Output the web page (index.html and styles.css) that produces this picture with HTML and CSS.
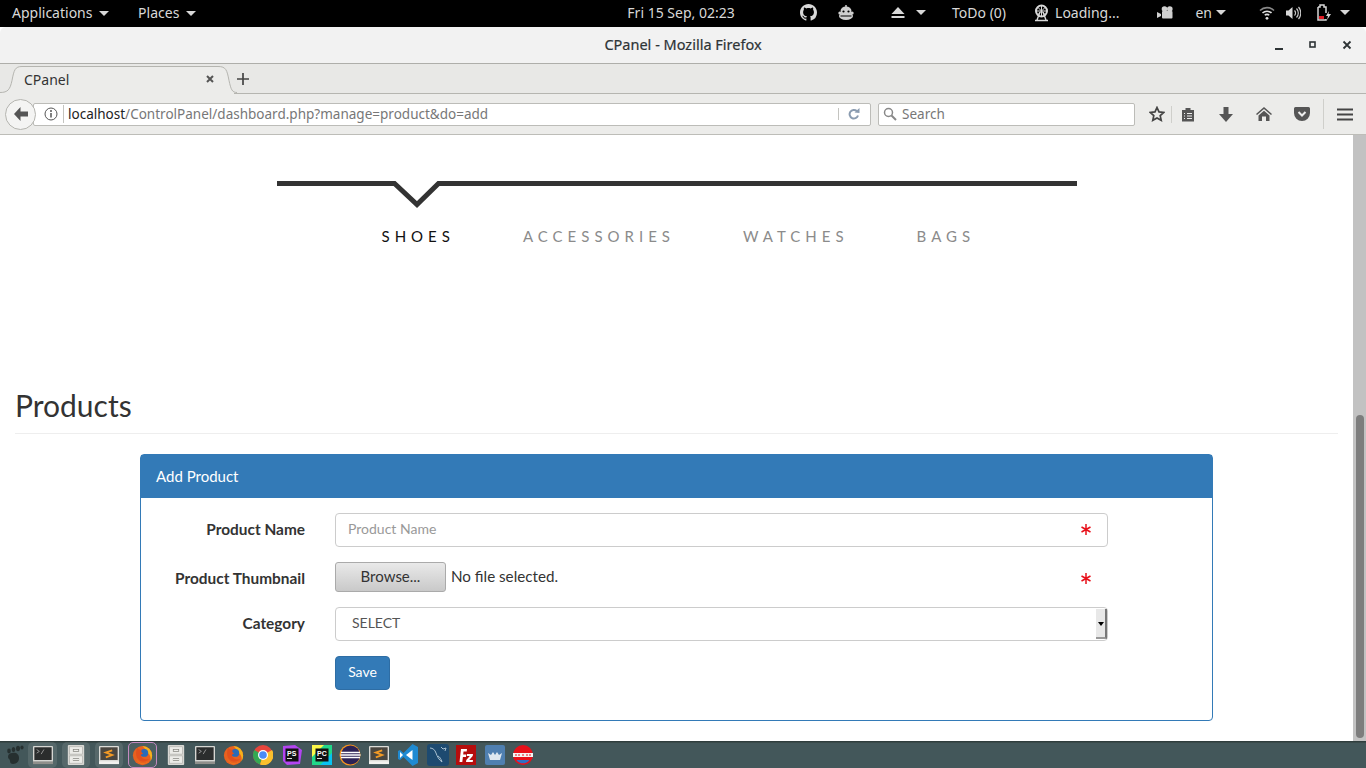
FILE: index.html
```html
<!DOCTYPE html>
<html lang="en">
<head>
    <meta charset="UTF-8">
    <title>CPanel - Mozilla Firefox</title>
    <link rel="stylesheet" href="styles.css">
</head>
<body>

    <!-- Shared taskbar icons -->
    <svg class="defs" width="0" height="0">
        <symbol id="i-terminal" viewBox="0 0 24 22">
            <rect x="1" y="1" width="22" height="20" rx="1" fill="#d6d6d2"/>
            <rect x="2.500" y="2.500" width="19" height="14" fill="#2b2d2d"/>
            <path d="M5 5l3 2-3 2M10 10l3-5" stroke="#9a9a9a" fill="none"/>
            <rect x="1" y="18" width="22" height="3" fill="#8f8f8b"/>
        </symbol>
        <symbol id="i-files" viewBox="0 0 22 24">
            <rect x="2" y="1" width="18" height="22" rx="1" fill="#d8d8d4"/>
            <rect x="4" y="3" width="14" height="8" fill="#ecece8" stroke="#a5a5a0" stroke-width=".6"/>
            <rect x="4" y="13" width="14" height="8" fill="#ecece8" stroke="#a5a5a0" stroke-width=".6"/>
            <rect x="8" y="6" width="6" height="2" fill="none" stroke="#85857f" stroke-width=".8"/>
            <rect x="8" y="16" width="6" height="2" fill="none" stroke="#85857f" stroke-width=".8"/>
        </symbol>
        <symbol id="i-sublime" viewBox="0 0 24 22">
            <rect x="1" y="1" width="22" height="20" rx="1" fill="#dcdcd8"/>
            <rect x="2.500" y="2.500" width="19" height="14" fill="#4a4640"/>
            <path d="M15.500 6l-7 2.400 7 2.600-7 2.600" stroke="#f49a25" stroke-width="2" fill="none"/>
            <rect x="1" y="18" width="22" height="3" fill="#f2f2ef"/>
        </symbol>
        <symbol id="i-firefox" viewBox="0 0 24 24">
            <circle cx="12" cy="12" r="11" fill="#e8611f"/>
            <path d="M12 1a11 11 0 0 1 11 11c0 3-1 5-2 7 1-4 0-8-3-10-1-2-3-5-6-8z" fill="#f6b21b"/>
            <circle cx="14" cy="9" r="4.500" fill="#2a6bb8"/>
            <path d="M6 3c-2 4-2 11 2 14 4 3 9 2 12-1-4 1-8 0-9.500-3-1-2 .5-3 2.500-3-2-1-3-2.500-2-4.500-2 0-4-1-5-2.500z" fill="#e2501c"/>
            <path d="M5 16c3 6 10 7 15 2-4 5-12 5-15-2z" fill="#f6a21b"/>
        </symbol>
    </svg>

    <!-- GNOME top bar -->
    <header class="topbar">
        <div class="topbar-left">
            <span class="menu">Applications <i class="caret"></i></span>
            <span class="menu menu-places">Places <i class="caret"></i></span>
        </div>
        <div class="clock">Fri 15 Sep, 02:23</div>
        <div class="topbar-right">
            <svg class="tray t-github" width="17" height="17" viewBox="0 0 16 16"><path d="M8 0C3.580 0 0 3.580 0 8c0 3.540 2.290 6.530 5.470 7.590.4.070.55-.17.55-.38 0-.19-.01-.82-.01-1.490-2.010.37-2.530-.49-2.690-.94-.09-.23-.48-.94-.82-1.130-.28-.15-.68-.52-.01-.53.63-.01 1.080.58 1.230.82.72 1.210 1.870.87 2.330.66.070-.52.28-.87.51-1.070-1.780-.2-3.640-.89-3.640-3.950 0-.87.31-1.590.82-2.150-.08-.2-.36-1.020.08-2.120 0 0 .67-.21 2.200.82.64-.18 1.320-.27 2-.27.68 0 1.360.09 2 .27 1.530-1.040 2.200-.82 2.200-.82.44 1.100.16 1.920.08 2.120.51.56.82 1.270.82 2.150 0 3.070-1.870 3.750-3.650 3.950.29.25.54.73.54 1.480 0 1.070-.01 1.930-.01 2.200 0 .21.15.46.55.38A8.013 8.013 0 0 0 16 8c0-4.420-3.580-8-8-8z" fill="#d8d8d8"/></svg>
            <svg class="tray t-monkey" width="16" height="18" viewBox="0 0 16 18"><circle cx="8" cy="2" r="1" fill="#d0d0d0"/><ellipse cx="8" cy="7" rx="5.500" ry="4.500" fill="#d0d0d0"/><circle cx="1.800" cy="9" r="1.500" fill="#d0d0d0"/><circle cx="14.200" cy="9" r="1.500" fill="#d0d0d0"/><ellipse cx="8" cy="12" rx="7" ry="4" fill="#d0d0d0"/><circle cx="5.500" cy="7.500" r="1.100" fill="#000"/><circle cx="10.500" cy="7.500" r="1.100" fill="#000"/><path d="M2.500 12h11" stroke="#000"/></svg>
            <svg class="tray t-eject" width="14" height="12" viewBox="0 0 14 12"><path d="M7 0l6.500 7H.5z" fill="#d8d8d8"/><rect x=".5" y="9" width="13" height="2" fill="#d8d8d8"/></svg>
            <i class="caret caret-eject"></i>
            <span class="tray-text t-todo">ToDo (0)</span>
            <svg class="tray t-wheel" width="15" height="18" viewBox="0 0 15 18"><circle cx="7.500" cy="7" r="5.500" fill="none" stroke="#d8d8d8" stroke-width="2"/><path d="M7.500 1.500v11M2 7h11M3.500 3l8 8M11.500 3l-8 8" stroke="#d8d8d8"/><path d="M6 8l-3 8M9 8l3 8M1 16.500h13" stroke="#d8d8d8" stroke-width="1.400"/></svg>
            <span class="tray-text t-loading">Loading...</span>
            <svg class="tray t-camera" width="16" height="13" viewBox="0 0 16 13"><circle cx="7.500" cy="3" r="2.800" fill="#d0d0d0"/><circle cx="12.800" cy="3" r="2.800" fill="#d0d0d0"/><rect x="5" y="5" width="10.500" height="7.500" rx="1" fill="#d0d0d0"/><path d="M0 6l4 2v2l-4 2z" fill="#d0d0d0"/></svg>
            <span class="tray-text t-lang">en</span>
            <i class="caret caret-lang"></i>
            <svg class="tray t-wifi" width="16" height="14" viewBox="0 0 16 14"><path d="M1 4.500a10 10 0 0 1 14 0" fill="none" stroke="#888" stroke-width="1.600"/><path d="M3.500 7a6.500 6.500 0 0 1 9 0" fill="none" stroke="#e0e0e0" stroke-width="1.600"/><path d="M5.800 9.300a3 3 0 0 1 4.400 0" fill="none" stroke="#e0e0e0" stroke-width="1.600"/><circle cx="8" cy="12.300" r="1.400" fill="#e0e0e0"/></svg>
            <svg class="tray t-volume" width="15" height="14" viewBox="0 0 15 14"><path d="M0 4.500h2.500L6.500 1v12L2.500 9.500H0z" fill="#d8d8d8"/><path d="M8.500 4.500a3.500 3.500 0 0 1 0 5M10.500 2.500a6.500 6.500 0 0 1 0 9M12.500 1a9 9 0 0 1 0 12" fill="none" stroke="#c8c8c8" stroke-width="1.200"/></svg>
            <svg class="tray t-battery" width="15" height="17" viewBox="0 0 15 17"><path d="M1 3h2V1h4v2h2v6M9 15v1H1V3" fill="none" stroke="#d8d8d8" stroke-width="1.500"/><rect x="2" y="12" width="5" height="3" fill="#e01b24"/><path d="M12 7l-3 5h2l-1 4 4-6h-2.500z" fill="#d8d8d8"/></svg>
            <i class="caret caret-power"></i>
        </div>
    </header>

    <!-- Firefox window -->
    <div class="window">
        <div class="titlebar">
            <span class="title">CPanel - Mozilla Firefox</span>
            <div class="win-buttons">
                <svg width="10" height="10" viewBox="0 0 10 10"><rect x="1" y="8" width="8" height="2" fill="#2e3436"/></svg>
                <svg width="10" height="10" viewBox="0 0 10 10"><rect x="2" y="2" width="5" height="5" fill="none" stroke="#2e3436" stroke-width="1.600"/></svg>
                <svg width="10" height="10" viewBox="0 0 10 10"><path d="M1.500 1.500l7 7M8.500 1.500l-7 7" stroke="#2e3436" stroke-width="1.800"/></svg>
            </div>
        </div>

        <div class="tabstrip">
            <div class="tab">
                <svg class="tab-shape" width="240" height="30" viewBox="0 0 240 30"><rect y="28" width="234" height="2" fill="#ececea"/><path d="M0 28.500c8 0 10-3 12-12C14 6 15 2.500 22 2.500h196c8 0 9 3.500 11 14 2 9 3 12 8 12" fill="#ececea" stroke="#b5b5b0"/></svg>
                <span class="tab-label">CPanel</span>
                <svg class="tab-close" width="8" height="8" viewBox="0 0 8 8"><path d="M1 1l6 6M7 1l-6 6" stroke="#555" stroke-width="2"/></svg>
            </div>
            <svg class="tab-new" width="12" height="12" viewBox="0 0 12 12"><path d="M6 0v12M0 6h12" stroke="#444" stroke-width="1.700"/></svg>
        </div>

        <div class="navbar">
            <div class="back">
                <svg width="16" height="14" viewBox="0 0 16 14"><path d="M7.500 0L1 7l6.500 7V9.500H15v-5H7.500z" fill="#555"/></svg>
            </div>
            <div class="urlbar">
                <svg class="info" width="14" height="14" viewBox="0 0 14 14"><circle cx="7" cy="7" r="6" fill="none" stroke="#555"/><path d="M7 6v4.500" stroke="#555" stroke-width="1.500"/><circle cx="7" cy="4" r="1" fill="#555"/></svg>
                <span class="url"><b>localhost</b>/ControlPanel/dashboard.php?manage=product&amp;do=add</span>
                <svg class="reload" width="12" height="12" viewBox="0 0 12 12"><path d="M10 7.500A4.300 4.300 0 1 1 8.800 3" fill="none" stroke="#8a9bb0" stroke-width="2"/><path d="M6.500 4.500L11.500 5V0z" fill="#8a9bb0"/></svg>
            </div>
            <div class="searchbar">
                <svg width="14" height="14" viewBox="0 0 14 14"><circle cx="5.500" cy="5.500" r="4" fill="none" stroke="#888" stroke-width="1.500"/><path d="M8.500 8.500l4.500 4.500" stroke="#888" stroke-width="2"/></svg>
                <span>Search</span>
            </div>
            <div class="tools">
                <svg class="tool-star" width="16" height="16" viewBox="0 0 16 16"><path d="M8 1.500l2 4.400 4.800.5-3.600 3.200 1 4.700L8 11.900l-4.200 2.400 1-4.700L1.200 6.400 6 5.900z" fill="none" stroke="#444" stroke-width="1.700"/></svg>
                <span class="tool-sep"></span>
                <svg class="tool-list" width="14" height="15" viewBox="0 0 14 15"><path d="M1 3h3.500V1h5v2H13v11.500H1z" fill="#555"/><path d="M3 6.500h1M3 9h1M3 11.500h1M6 6.500h5M6 9h5M6 11.500h5" stroke="#eee"/></svg>
                <svg class="tool-down" width="14" height="15" viewBox="0 0 14 15"><path d="M4.500 0h5v7H14l-7 8-7-8h4.500z" fill="#555"/></svg>
                <svg class="tool-home" width="16" height="14" viewBox="0 0 16 14"><path d="M8 0L0 7l1 1 7-6 7 6 1-1z" fill="#555"/><path d="M2.500 8.500L8 3.700l5.500 4.800V14H10V9.500H6V14H2.500z" fill="#555"/></svg>
                <svg class="tool-pocket" width="16" height="14" viewBox="0 0 16 14"><path d="M1.500 0h13A1.500 1.500 0 0 1 16 1.500V6a8 8 0 0 1-16 0V1.500A1.500 1.500 0 0 1 1.500 0z" fill="#555"/><path d="M4.500 5L8 8.500 11.500 5" fill="none" stroke="#eee" stroke-width="2"/></svg>
                <span class="tool-sep tool-sep-menu"></span>
                <svg class="tool-menu" width="16" height="13" viewBox="0 0 16 13"><path d="M0 1.500h16M0 6.500h16M0 11.500h16" stroke="#444" stroke-width="2.200"/></svg>
            </div>
        </div>

        <!-- Page -->
        <div class="viewport">
            <main class="page">
                <nav class="catnav">
                    <svg class="catnav-line" width="800" height="30" viewBox="0 0 800 30"><path d="M0 3.500h117.500L140 24.500 161.500 3.500H800" fill="none" stroke="#333" stroke-width="5"/></svg>
                    <ul class="catnav-list">
                        <li class="active">SHOES</li>
                        <li>ACCESSORIES</li>
                        <li>WATCHES</li>
                        <li>BAGS</li>
                    </ul>
                </nav>

                <h1 class="page-header">Products</h1>

                <section class="panel">
                    <div class="panel-heading">Add Product</div>
                    <form class="panel-body">
                        <label class="form-label" for="pname">Product Name</label>
                        <div class="field">
                            <input class="form-control" id="pname" type="text" placeholder="Product Name">
                            <svg class="required" width="10" height="11" viewBox="0 0 10 11"><path d="M5 0v11M.5 3l9 5M9.500 3l-9 5" stroke="#e8101a" stroke-width="1.500"/></svg>
                        </div>

                        <label class="form-label label-thumb">Product Thumbnail</label>
                        <div class="field file-field">
                            <button class="browse" type="button">Browse...</button>
                            <span class="file-name">No file selected.</span>
                            <svg class="required" width="10" height="11" viewBox="0 0 10 11"><path d="M5 0v11M.5 3l9 5M9.500 3l-9 5" stroke="#e8101a" stroke-width="1.500"/></svg>
                        </div>

                        <label class="form-label" for="pcat">Category</label>
                        <div class="field">
                            <select class="form-control form-select" id="pcat">
                                <option>SELECT</option>
                            </select>
                            <span class="select-arrow"></span>
                        </div>

                        <div class="field field-save">
                            <button class="btn-save" type="button">Save</button>
                        </div>
                    </form>
                </section>
            </main>
            <div class="scrollbar"><div class="thumb"></div></div>
        </div>
    </div>

    <!-- Dash to panel -->
    <footer class="taskbar">
        <svg class="task foot" width="20" height="20" viewBox="0 0 20 20"><path d="M7 8c4-1 7 1 7 5 0 4-3 6-6 6-2 0-3-1-3-3 0-2-2-2-2-4 0-3 2-4 4-4z" fill="#263030"/><ellipse cx="4" cy="6" rx="1.800" ry="2.400" fill="#263030"/><ellipse cx="8.500" cy="4.500" rx="1.800" ry="2.600" fill="#263030"/><ellipse cx="13" cy="3.500" rx="2" ry="2.800" fill="#263030"/><ellipse cx="17" cy="2.500" rx="1.600" ry="2" fill="#263030"/></svg>
        <span class="slot slot-term"><svg width="22" height="20"><use href="#i-terminal"/></svg></span>
        <span class="slot slot-files"><svg width="20" height="22"><use href="#i-files"/></svg></span>
        <span class="slot slot-sub"><svg width="22" height="20"><use href="#i-sublime"/></svg></span>
        <span class="slot slot-active"><svg width="21" height="21"><use href="#i-firefox"/></svg></span>
        <svg class="task t-files2" width="20" height="22"><use href="#i-files"/></svg>
        <svg class="task t-term2" width="22" height="20"><use href="#i-terminal"/></svg>
        <svg class="task t-fox2" width="21" height="21"><use href="#i-firefox"/></svg>
        <svg class="task t-chrome" width="20" height="20" viewBox="0 0 20 20"><circle cx="10" cy="10" r="10" fill="#e8453c"/><path d="M10 10L1.300 5A10 10 0 0 0 7 19.500z" fill="#34a853"/><path d="M10 10l9-5A10 10 0 0 1 7 19.500z" fill="#fbc02d"/><circle cx="10" cy="10" r="5" fill="#fff"/><circle cx="10" cy="10" r="3.800" fill="#4a8af4"/></svg>
        <svg class="task t-ps" width="20" height="20" viewBox="0 0 20 20"><path d="M1 1l12-1 7 5-2 14-13 1-4-4z" fill="#b345f1"/><rect x="3.500" y="3.500" width="13" height="13" fill="#111"/><text x="5" y="11" class="app-text">PS</text><rect x="5" y="13" width="5" height="1" fill="#ddd"/></svg>
        <svg class="task t-pc" width="20" height="20" viewBox="0 0 20 20"><rect width="20" height="20" fill="#21d789"/><path d="M0 0h12L0 12z" fill="#fcf84a"/><path d="M20 20H8l12-12z" fill="#07c3f2"/><rect x="3.500" y="3.500" width="13" height="13" fill="#111"/><text x="5" y="11" class="app-text">PC</text><rect x="5" y="13" width="5" height="1" fill="#ddd"/></svg>
        <svg class="task t-eclipse" width="22" height="22" viewBox="0 0 22 22"><circle cx="11" cy="11" r="10.500" fill="#f7941e"/><circle cx="11.500" cy="11" r="9.500" fill="#2c2255"/><path d="M2 8.500h19M1.500 11h20M2 13.500h19" stroke="#fff" stroke-width="1.300"/></svg>
        <svg class="task t-sub2" width="22" height="20"><use href="#i-sublime"/></svg>
        <svg class="task t-code" width="20" height="22" viewBox="0 0 20 22"><path d="M14.500 0L20 3v16l-5.500 3L5.500 13 2 16l-2-1V7l2-1 3.500 3z" fill="#1f8ad2"/><path d="M14.500 6v10L8 11z" fill="#fff"/><path d="M2 8v6l3-3z" fill="#fff"/></svg>
        <svg class="task t-mysql" width="22" height="22" viewBox="0 0 22 22"><rect width="22" height="22" rx="3" fill="#1d4a70"/><path d="M3 4c3 0 5 2 6 5s3 7 6 9M15 18c-1-3-2-5-4-6M14 3l2 2 3-1-1 3" fill="none" stroke="#a9c0d0"/></svg>
        <svg class="task t-zilla" width="20" height="20" viewBox="0 0 20 20"><rect width="20" height="20" fill="#b50d0d"/><path d="M3.500 17L5 4h6l-.3 2.500H7.500l-.3 3h3L10 12H6.900l-.6 5z" fill="#fff"/><path d="M11 9h6l-.3 2-3.500 4H17l-.3 2H10l.3-2 3.500-4H10.800z" fill="#fff"/></svg>
        <svg class="task t-king" width="20" height="20" viewBox="0 0 20 20"><rect width="20" height="20" rx="2" fill="#4f7fb0"/><path d="M3 8l3 2 2-3 2 3 2-3 2 3 3-2-2 7H5z" fill="#dfe8f0"/></svg>
        <svg class="task t-unity" width="20" height="20" viewBox="0 0 20 20"><circle cx="10" cy="10" r="10" fill="#e8101a"/><rect x="0" y="8" width="20" height="4" fill="#f4f4f4"/><path d="M3 9v2M6 9v2M10 9v2M14 9v2M17 9v2" stroke="#e8101a"/><path d="M3.500 15h13a8 8 0 0 1-13 0z" fill="#2f6fc4"/></svg>
    </footer>

</body>
</html>
```

FILE: styles.css
```css
/* General */
html, body {
    height: 100%;
}

body {
    margin: 0;
    height: 768px;
    overflow: hidden;
    display: flex;
    flex-direction: column;
    background: #000;
    font-family: 'Noto Sans', sans-serif;
}

.defs {
    position: absolute;
}

/* Top bar */
.topbar {
    height: 27px;
    flex: none;
    box-sizing: border-box;
    padding-bottom: 2px;
    display: flex;
    align-items: center;
    background: #000;
    color: #d8d8d8;
    font-size: 14px;
}

.topbar-left, .topbar-right {
    flex: 1 1 0;
    display: flex;
    align-items: center;
}

.topbar-left {
    padding-left: 12px;
}

.topbar-right {
    padding-right: 16px;
    justify-content: flex-end;
}

.menu-places {
    margin-left: 29px;
}

.clock {
    flex: none;
}

.caret {
    display: inline-block;
    width: 0;
    height: 0;
    margin-left: 3px;
    border-left: 5px solid transparent;
    border-right: 5px solid transparent;
    border-top: 5px solid #d8d8d8;
    vertical-align: 2px;
}

.tray {
    flex: none;
}

.tray-text {
    flex: none;
}

.t-monkey { margin-left: 21px; }
.t-eject { margin-left: 37px; }
.caret-eject { margin-left: 11px; }
.t-todo { margin-left: 26px; }
.t-wheel { margin-left: 28px; }
.t-loading { margin-left: 6px; }
.t-camera { margin-left: 38px; }
.t-lang { margin-left: 22px; }
.caret-lang { margin-left: 4px; }
.t-wifi { margin-left: 33px; }
.t-volume { margin-left: 11px; }
.t-battery { margin-left: 16px; }
.caret-power { margin-left: 8px; }

/* Window chrome */
.window {
    flex: 1;
    min-height: 0;
    display: flex;
    flex-direction: column;
    background: #fff;
}

.titlebar {
    height: 36px;
    flex: none;
    position: relative;
    display: flex;
    align-items: center;
    justify-content: center;
    background: #f2f2f2;
    border-bottom: 1px solid #aeaeaa;
    border-radius: 6px 6px 0 0;
    color: #2e3436;
    font-size: 14.500px;
}

.title {
    padding-bottom: 2px;
    -webkit-text-stroke: 0.2px #2e3436;
}

.win-buttons {
    position: absolute;
    right: 14px;
    top: 13px;
    display: flex;
    gap: 24px;
}

.tabstrip {
    height: 30px;
    flex: none;
    display: flex;
    align-items: flex-end;
    background: #e8e8e6;
    box-shadow: inset 0 -1px 0 #b5b5b0;
}

.tab {
    position: relative;
    width: 232px;
    height: 30px;
    display: flex;
    align-items: center;
    font-size: 14px;
    color: #333;
}

.tab-shape {
    position: absolute;
    left: 0;
    top: 0;
}

.tab-label {
    position: relative;
    margin-left: 24px;
}

.tab-close {
    position: relative;
    margin-left: 137px;
}

.tab-new {
    position: relative;
    margin: 0 0 9px 5px;
}

.navbar {
    height: 41px;
    flex: none;
    display: flex;
    align-items: center;
    background: #ececea;
    border-bottom: 1px solid #bdbdb8;
    padding-left: 5px;
    font-size: 13.530px;
    box-sizing: border-box;
}

.back {
    width: 29px;
    height: 29px;
    flex: none;
    display: flex;
    align-items: center;
    justify-content: center;
    position: relative;
    z-index: 1;
    background: #f4f4f3;
    border: 1px solid #b5b5b0;
    border-radius: 50%;
}

.urlbar, .searchbar {
    height: 23px;
    box-sizing: border-box;
    display: flex;
    align-items: center;
    background: #fff;
    border: 1px solid #bcbcb8;
    border-radius: 2px;
}

.urlbar {
    width: 838px;
    margin-left: -3px;
    padding-left: 10px;
}

.url {
    flex: 1;
    margin-left: 5px;
    padding-left: 4px;
    border-left: 1px solid #c4c4c0;
    color: #777;
    line-height: 18px;
    white-space: nowrap;
}

.url b {
    font-weight: normal;
    color: #222;
}

.reload {
    margin-right: 10px;
    padding-left: 9px;
    border-left: 1px solid #c4c4c0;
}

.searchbar {
    width: 257px;
    margin-left: 7px;
    padding-left: 4px;
    gap: 5px;
    color: #777;
}

.tools {
    flex: 1;
    display: flex;
    align-items: center;
}

.tool-star { margin-left: 14px; }
.tool-sep {
    width: 1px;
    height: 17px;
    margin-left: 6px;
    background: #cfcfcb;
}
.tool-list { margin-left: 9px; }
.tool-down { margin-left: 24px; }
.tool-home { margin-left: 23px; }
.tool-pocket { margin-left: 22px; }
.tool-sep-menu { height: 30px; margin-left: 13px; }
.tool-menu { margin-left: 13px; }

/* Page */
.viewport {
    flex: 1;
    min-height: 0;
    display: flex;
}

.page {
    flex: 1;
    min-width: 0;
    padding: 0 15px;
    color: #333;
    font-family: 'Lato', sans-serif;
}

.scrollbar {
    width: 13px;
    flex: none;
    box-sizing: border-box;
    padding: 280px 2px 3px 3px;
    background: #c2c2c2;
}

.thumb {
    height: 100%;
    background: #7d7d7d;
    border-radius: 4px;
}

/* Category nav */
.catnav {
    width: 800px;
    margin: 0 auto;
    padding-top: 45px;
}

.catnav-line {
    display: block;
}

.catnav-list {
    list-style: none;
    display: flex;
    margin: 15px 0 0;
    padding: 0 0 0 105px;
    gap: 68px;
    font-size: 15px;
    line-height: 22px;
    letter-spacing: 5px;
    color: #8b8b8b;
}

.catnav-list .active {
    color: #111;
}

.page-header {
    margin: 140px 0 20px;
    padding-bottom: 10px;
    border-bottom: 1px solid #eee;
    font-size: 30px;
    font-weight: 400;
    line-height: 36px;
}

/* Panel */
.panel {
    width: 1073px;
    box-sizing: border-box;
    margin: 0 auto;
    background: #fff;
    border: 1px solid #337ab7;
    border-radius: 4px;
}

.panel-heading {
    height: 43px;
    padding-left: 15px;
    background: #337ab7;
    color: #fff;
    font-size: 15px;
    line-height: 42px;
}

.panel-body {
    display: grid;
    grid-template-columns: 164px 773px;
    column-gap: 30px;
    row-gap: 15px;
    padding: 15px 0 30px;
    font-size: 15.200px;
}

.form-label {
    align-self: center;
    padding-bottom: 2px;
    text-align: right;
    font-size: 15.400px;
    font-weight: 700;
}

.label-thumb {
    padding-top: 3px;
}

.field {
    position: relative;
    height: 34px;
}

.file-field {
    height: 30px;
    display: flex;
    align-items: center;
}

.field-save {
    grid-column: 2;
}

.form-control {
    width: 100%;
    height: 34px;
    box-sizing: border-box;
    padding: 0 12px 3px;
    background: #fff;
    border: 1px solid #ccc;
    border-radius: 4px;
    color: #555;
    font: 14px 'Lato', sans-serif;
}

.form-control::placeholder {
    color: #999;
}

.form-select {
    appearance: none;
    padding-left: 16px;
}

.select-arrow {
    position: absolute;
    right: 1px;
    top: 2px;
    width: 11px;
    height: 30px;
    background: #e8e8e8;
    border-right: 2px solid #777;
    border-bottom: 2px solid #999;
    box-sizing: border-box;
}

.select-arrow::after {
    content: '';
    position: absolute;
    left: 2px;
    top: 13px;
    border-left: 3px solid transparent;
    border-right: 3px solid transparent;
    border-top: 4px solid #000;
}

.required {
    position: absolute;
    left: 746px;
    top: 11px;
}

.file-field .required {
    top: 11px;
}

.browse {
    width: 111px;
    height: 30px;
    padding: 0 0 2px;
    background: linear-gradient(#e9e9e9, #c9c9c9);
    border: 1px solid #aaa;
    border-radius: 3px;
    color: #333;
    font: 15px 'Lato', sans-serif;
}

.file-name {
    margin-left: 5px;
    padding-bottom: 2px;
}

.btn-save {
    width: 55px;
    height: 34px;
    padding: 0 0 3px;
    background: #337ab7;
    border: 1px solid #2e6da4;
    border-radius: 4px;
    color: #fff;
    font: 14px 'Lato', sans-serif;
}

/* Taskbar */
.taskbar {
    height: 27px;
    flex: none;
    box-sizing: border-box;
    display: flex;
    align-items: center;
    padding-left: 5px;
    background: #43575a;
    border-top: 1px solid #2f3d3d;
    box-shadow: inset 0 1px 0 #3a4a4a;
}

.task {
    flex: none;
}

.slot {
    height: 26px;
    flex: none;
    display: flex;
    align-items: center;
    justify-content: center;
    box-sizing: border-box;
    background: rgba(255, 255, 255, 0.1);
    border-radius: 5px;
}

.slot-term { width: 29px; margin-left: 3px; }
.slot-files { width: 28px; margin-left: 5px; }
.slot-sub { width: 28px; margin-left: 5px; }
.slot-active {
    width: 29px;
    margin-left: 5px;
    background: rgba(255, 255, 255, 0.05);
    border: 1px solid #c48ac0;
}

.t-files2 { margin-left: 9px; }
.t-term2 { margin-left: 8px; }
.t-fox2 { margin-left: 7px; }
.t-chrome { margin-left: 9px; }
.t-ps { margin-left: 9px; }
.t-pc { margin-left: 10px; }
.t-eclipse { margin-left: 7px; }
.t-sub2 { margin-left: 7px; }
.t-code { margin-left: 8px; }
.t-mysql { margin-left: 9px; }
.t-zilla { margin-left: 7px; }
.t-king { margin-left: 9px; }
.t-unity { margin-left: 8px; }

.app-text {
    font: 700 7px 'Liberation Sans', sans-serif;
    fill: #fff;
}
```
